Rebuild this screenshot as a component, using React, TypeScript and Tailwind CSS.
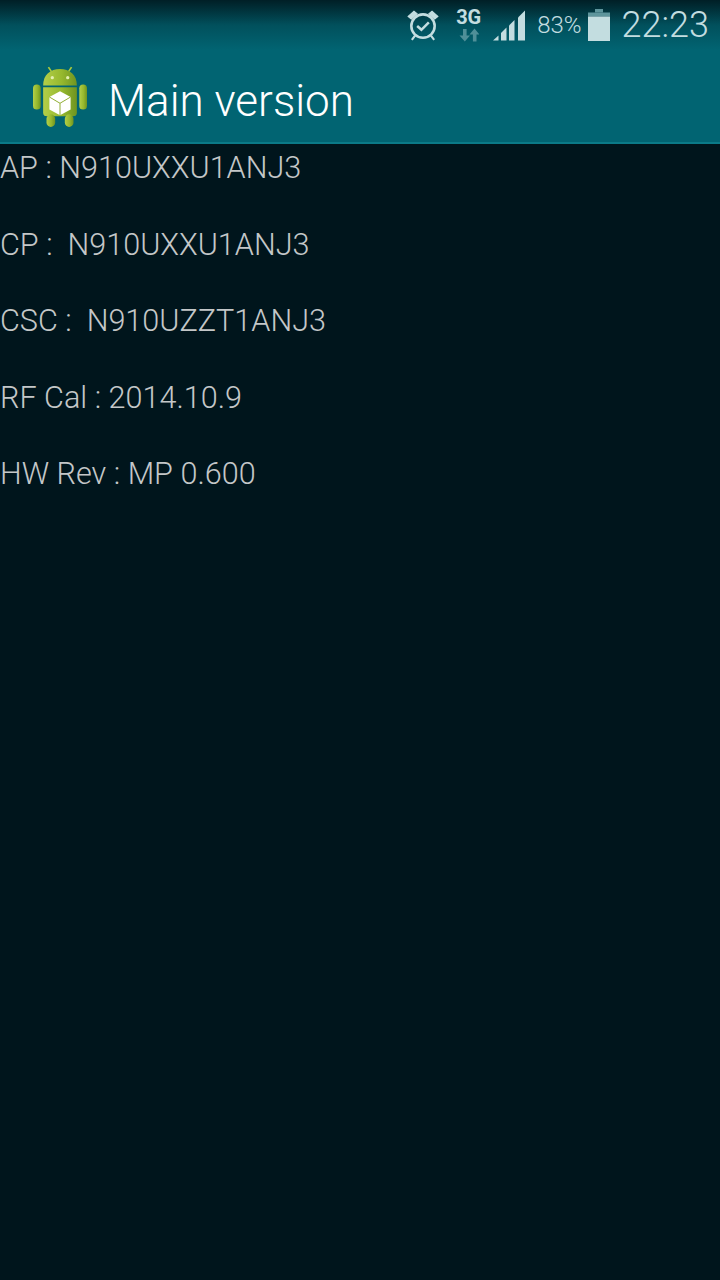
const font = { fontFamily: 'Roboto, "Noto Sans", sans-serif' };

function Alarm() {
  return (
    <svg width="34" height="34" viewBox="0 0 32 32" fill="none" stroke="#c3dde0" strokeWidth="2.4">
      <circle cx="16" cy="17" r="11" />
      <path d="M10.500 17l4 3.500 7-7" strokeWidth="2.400" />
      <path d="M2 8l5.500-5 3 2.500L5 10.500zM30 8l-5.500-5-3 2.500 5.500 5z" fill="#c3dde0" strokeWidth="1" />
      <path d="M8.500 26l-3 4M23.500 26l3 4" strokeWidth="2" />
    </svg>
  );
}

function Net() {
  return (
    <div className="flex flex-col items-center w-[29px] -mt-[2px]">
      <span className="text-[20px] leading-[20px] font-bold text-[#c3dde0]">3G</span>
      <svg width="20" height="14" viewBox="0 0 20 14" fill="#4f8f98" className="mt-[1px]">
        <path d="M5 1h3.600v6.500H12L6.800 13.600 1.500 7.500H5zM11.500 6.500L16.500.5l5 6h-3v7h-3.600v-7z" transform="translate(-1 0)" />
      </svg>
    </div>
  );
}

function Signal() {
  return (
    <svg width="32" height="32" viewBox="0 0 32 32" fill="#c3dde0">
      <path d="M0 31.500l5.500-5v5z" />
      <path d="M8 24l5.500-5.500v13H8z" />
      <path d="M16 16.500l5.500-5.500v20.500H16z" />
      <path d="M25 8.500l7-7v30h-7z" />
    </svg>
  );
}

function Battery() {
  return (
    <svg width="22" height="32" viewBox="0 0 22 32">
      <path d="M7 0h8v3.500H7z" fill="#5e959c" />
      <path d="M0 3.500h22v4H0z" fill="#5e959c" />
      <path d="M0 7.500h22V32H0z" fill="#c3dde0" />
    </svg>
  );
}

function Robot() {
  return (
    <svg width="54" height="62" viewBox="0 0 56 64">
      <defs>
        <linearGradient id="g" x1="0" y1="0" x2="1" y2="0">
          <stop offset="0" stopColor="#b4cf48" />
          <stop offset="0.55" stopColor="#96b82e" />
          <stop offset="1" stopColor="#6f9420" />
        </linearGradient>
      </defs>
      <path d="M16 1l4 6M40 1l-4 6" stroke="#a9c83c" strokeWidth="1.800" />
      <path d="M10.500 20C10.500 9 18 3 28 3s17.500 6 17.500 17z" fill="url(#g)" />
      <circle cx="20" cy="12" r="1.700" fill="#e4efb0" />
      <circle cx="36" cy="12" r="1.700" fill="#e4efb0" />
      <path d="M10.500 22h35v26a4 4 0 0 1-4 4h-27a4 4 0 0 1-4-4z" fill="url(#g)" />
      <rect x="0" y="19" width="8" height="26" rx="4" fill="url(#g)" />
      <rect x="48" y="19" width="8" height="26" rx="4" fill="url(#g)" />
      <rect x="14" y="50" width="9" height="13" rx="4.500" fill="url(#g)" />
      <rect x="33" y="50" width="9" height="13" rx="4.500" fill="url(#g)" />
      <path d="M28 26l11 6v13l-11 6-11-6V32z" fill="#fff" />
      <path d="M17 32l11 6.500L39 32M28 38.500V51" stroke="#8cab2c" strokeWidth="1" fill="none" />
    </svg>
  );
}

const rows = [
  'AP : N910UXXU1ANJ3',
  'CP :\u00a0 N910UXXU1ANJ3',
  'CSC :\u00a0 N910UZZT1ANJ3',
  'RF Cal : 2014.10.9',
  'HW Rev : MP 0.600',
];

export default function App() {
  return (
    <div style={font} className="w-[720px] h-[1280px] bg-[#00151c] flex flex-col overflow-hidden">
      <div className="h-[50px] bg-gradient-to-b from-[#001f26] via-[#01505c] to-[#016472] flex items-center justify-end pr-[11px]">
        <Alarm />
        <div className="ml-[14px]"><Net /></div>
        <div className="ml-[10px]"><Signal /></div>
        <span className="ml-[12px] text-[24px] text-[#c3dde0] font-light">83%</span>
        <div className="ml-[6px]"><Battery /></div>
        <div className="ml-[12px]">
          <span className="text-[36px] leading-[50px] text-[#c3dde0] font-light">22:23</span>
        </div>
      </div>
      <div className="h-[94px] bg-[#016472] border-b-2 border-[#0b7a88] flex items-center pl-[33px] pt-[8px] gap-[21px]">
        <div className="-mt-[6px]"><Robot /></div>
        <span className="text-[44px] leading-[56px] text-white font-light translate-y-[1px]">Main version</span>
      </div>
      <div className="flex flex-col gap-[34px] pt-[3px]">
        {rows.map((r) => (
          <div key={r} className="text-[30.6px] leading-[42.500px] font-light text-[#c4c7c8] whitespace-nowrap">
            {r}
          </div>
        ))}
      </div>
    </div>
  );
}
